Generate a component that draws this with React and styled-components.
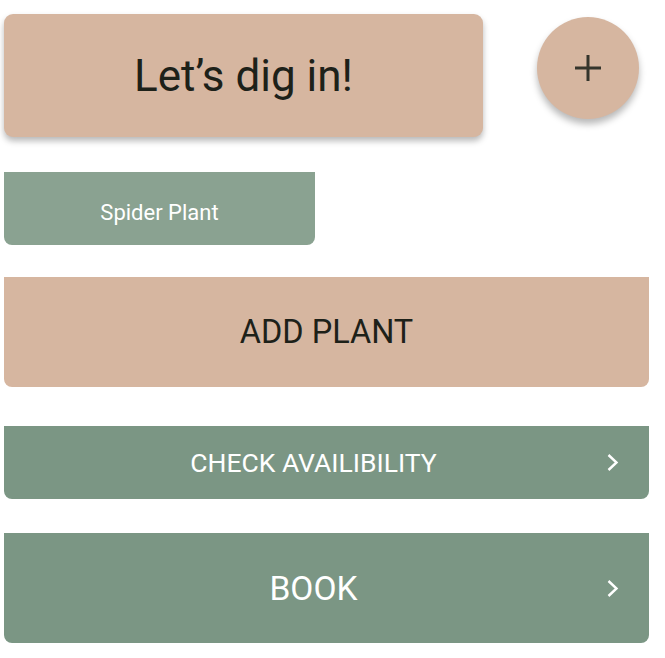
import React from 'react';
import styled, { createGlobalStyle } from 'styled-components';

const GlobalStyle = createGlobalStyle`
    body {
        margin: 0;
        background: #ffffff;
        font-family: Roboto, 'Noto Sans', sans-serif;
    }
`;

const Page = styled.div`
    display: flex;
    flex-direction: column;
    padding: 14px 16px 0 4px;
`;

const TopRow = styled.div`
    display: flex;
    flex-direction: row;
    align-items: flex-start;
    gap: 54px;
`;

const HeroButton = styled.button`
    width: 479px;
    height: 123px;
    border: none;
    border-radius: 9px;
    background: #d6b6a0;
    box-shadow: 0 4px 6px rgba(0, 0, 0, 0.28);
    color: #1d2119;
    font-family: Roboto, sans-serif;
    font-size: 44px;
    font-weight: 400;
    padding: 0;
`;

const Fab = styled.button`
    margin-top: 3px;
    width: 102px;
    height: 102px;
    border: none;
    border-radius: 50%;
    background: #d6b6a0;
    box-shadow: 0 5px 7px rgba(0, 0, 0, 0.28);
    display: flex;
    align-items: center;
    justify-content: center;
    padding: 0;
`;

const Block = styled.button`
    margin-top: ${(p) => p.gap}px;
    width: ${(p) => (p.narrow ? '311px' : '645px')};
    height: ${(p) => p.h}px;
    border: none;
    border-radius: 0 0 8px 8px;
    background: ${(p) => p.bg};
    color: ${(p) => p.fg};
    font-family: Roboto, sans-serif;
    font-size: ${(p) => p.size}px;
    font-weight: 400;
    display: flex;
    align-items: center;
    padding: ${(p) => (p.narrow ? '7px 0 0 0' : '0')};
`;

const Label = styled.span`
    flex: 1;
    text-align: center;
`;

const Chevron = styled.svg`
    flex: none;
    width: 13px;
    height: 19px;
    margin-left: -17px;
    margin-right: 30px;
`;

const ArrowIcon = () => (
    <Chevron viewBox="0 0 13 19">
        <path d="M2.5 2 L10.5 9.5 L2.5 17" fill="none" stroke="#ffffff" strokeWidth="2.4" />
    </Chevron>
);

export default function App() {
    return (
        <Page>
            <GlobalStyle />
            <TopRow>
                <HeroButton>Let’s dig in!</HeroButton>
                <Fab>
                    <svg width="30" height="30" viewBox="0 0 30 30">
                        <path d="M15 2 V28 M2 15 H28" stroke="#35352c" strokeWidth="3" />
                    </svg>
                </Fab>
            </TopRow>
            <Block gap={35} h={73} narrow bg="#8aa291" fg="#ffffff" size={22}>
                <Label>Spider Plant</Label>
            </Block>
            <Block gap={32} h={110} bg="#d6b6a0" fg="#1d2119" size={32.5}>
                <Label>ADD PLANT</Label>
            </Block>
            <Block gap={39} h={73} bg="#7b9684" fg="#ffffff" size={26.5}>
                <Label>CHECK AVAILIBILITY</Label>
                <ArrowIcon />
            </Block>
            <Block gap={34} h={110} bg="#7b9684" fg="#ffffff" size={33.5}>
                <Label>BOOK</Label>
                <ArrowIcon />
            </Block>
        </Page>
    );
}
